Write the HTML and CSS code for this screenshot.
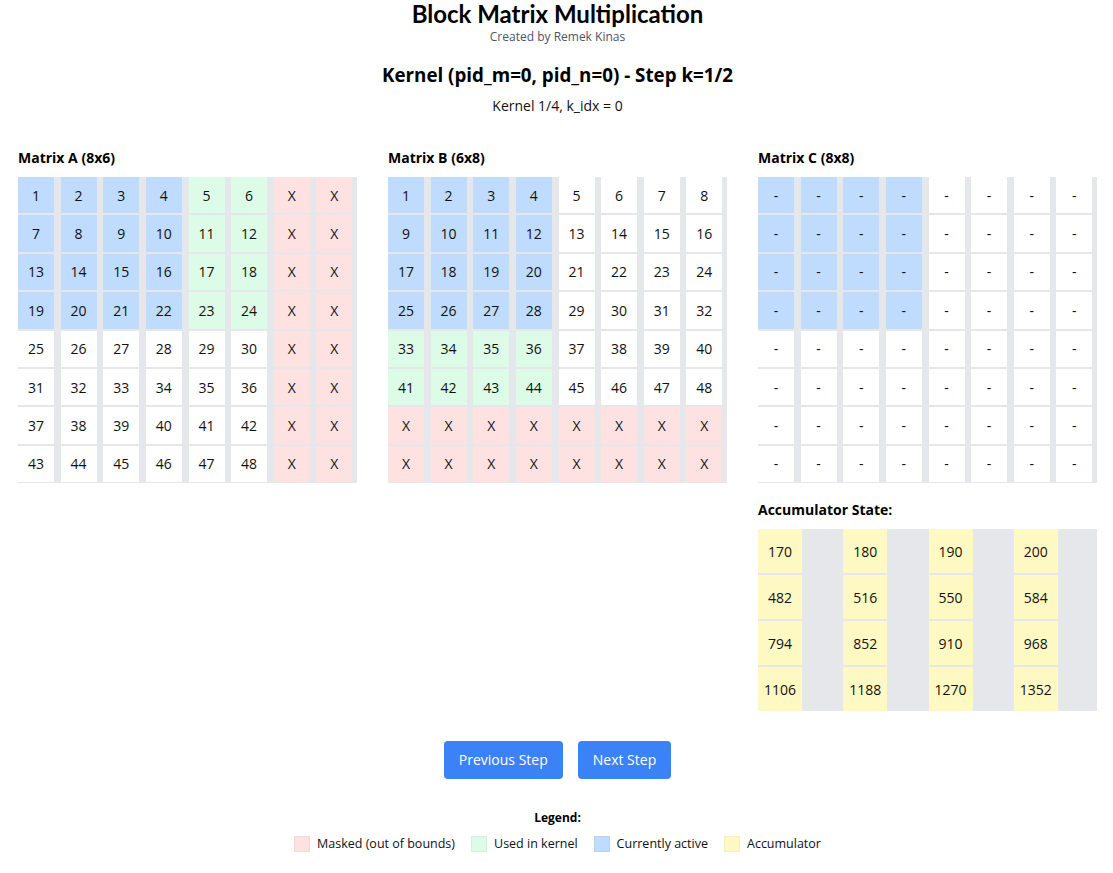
FILE: index.html
```html
<!DOCTYPE html>
<html lang="en">
<head>
<meta charset="utf-8">
<title>Block Matrix Multiplication</title>
<link rel="stylesheet" href="styles.css">
</head>
<body>
<div class="page">
  <header class="header">
    <h1 class="title">Block Matrix Multiplication</h1>
    <p class="credit">Created by Remek Kinas</p>
    <h2 class="step">Kernel (pid_m=0, pid_n=0) - Step k=1/2</h2>
    <p class="kernel-info">Kernel 1/4, k_idx = 0</p>
  </header>

  <main class="matrices">
    <section class="matrix">
      <h3 class="matrix-title">Matrix A (8x6)</h3>
      <div class="grid">
        <div class="cell active">1</div><div class="cell active">2</div><div class="cell active">3</div><div class="cell active">4</div><div class="cell used">5</div><div class="cell used">6</div><div class="cell masked">X</div><div class="cell masked">X</div>
        <div class="cell active">7</div><div class="cell active">8</div><div class="cell active">9</div><div class="cell active">10</div><div class="cell used">11</div><div class="cell used">12</div><div class="cell masked">X</div><div class="cell masked">X</div>
        <div class="cell active">13</div><div class="cell active">14</div><div class="cell active">15</div><div class="cell active">16</div><div class="cell used">17</div><div class="cell used">18</div><div class="cell masked">X</div><div class="cell masked">X</div>
        <div class="cell active">19</div><div class="cell active">20</div><div class="cell active">21</div><div class="cell active">22</div><div class="cell used">23</div><div class="cell used">24</div><div class="cell masked">X</div><div class="cell masked">X</div>
        <div class="cell">25</div><div class="cell">26</div><div class="cell">27</div><div class="cell">28</div><div class="cell">29</div><div class="cell">30</div><div class="cell masked">X</div><div class="cell masked">X</div>
        <div class="cell">31</div><div class="cell">32</div><div class="cell">33</div><div class="cell">34</div><div class="cell">35</div><div class="cell">36</div><div class="cell masked">X</div><div class="cell masked">X</div>
        <div class="cell">37</div><div class="cell">38</div><div class="cell">39</div><div class="cell">40</div><div class="cell">41</div><div class="cell">42</div><div class="cell masked">X</div><div class="cell masked">X</div>
        <div class="cell">43</div><div class="cell">44</div><div class="cell">45</div><div class="cell">46</div><div class="cell">47</div><div class="cell">48</div><div class="cell masked">X</div><div class="cell masked">X</div>
      </div>
    </section>

    <section class="matrix">
      <h3 class="matrix-title">Matrix B (6x8)</h3>
      <div class="grid">
        <div class="cell active">1</div><div class="cell active">2</div><div class="cell active">3</div><div class="cell active">4</div><div class="cell">5</div><div class="cell">6</div><div class="cell">7</div><div class="cell">8</div>
        <div class="cell active">9</div><div class="cell active">10</div><div class="cell active">11</div><div class="cell active">12</div><div class="cell">13</div><div class="cell">14</div><div class="cell">15</div><div class="cell">16</div>
        <div class="cell active">17</div><div class="cell active">18</div><div class="cell active">19</div><div class="cell active">20</div><div class="cell">21</div><div class="cell">22</div><div class="cell">23</div><div class="cell">24</div>
        <div class="cell active">25</div><div class="cell active">26</div><div class="cell active">27</div><div class="cell active">28</div><div class="cell">29</div><div class="cell">30</div><div class="cell">31</div><div class="cell">32</div>
        <div class="cell used">33</div><div class="cell used">34</div><div class="cell used">35</div><div class="cell used">36</div><div class="cell">37</div><div class="cell">38</div><div class="cell">39</div><div class="cell">40</div>
        <div class="cell used">41</div><div class="cell used">42</div><div class="cell used">43</div><div class="cell used">44</div><div class="cell">45</div><div class="cell">46</div><div class="cell">47</div><div class="cell">48</div>
        <div class="cell masked">X</div><div class="cell masked">X</div><div class="cell masked">X</div><div class="cell masked">X</div><div class="cell masked">X</div><div class="cell masked">X</div><div class="cell masked">X</div><div class="cell masked">X</div>
        <div class="cell masked">X</div><div class="cell masked">X</div><div class="cell masked">X</div><div class="cell masked">X</div><div class="cell masked">X</div><div class="cell masked">X</div><div class="cell masked">X</div><div class="cell masked">X</div>
      </div>
    </section>

    <section class="matrix">
      <h3 class="matrix-title">Matrix C (8x8)</h3>
      <div class="grid">
        <div class="cell active">-</div><div class="cell active">-</div><div class="cell active">-</div><div class="cell active">-</div><div class="cell">-</div><div class="cell">-</div><div class="cell">-</div><div class="cell">-</div>
        <div class="cell active">-</div><div class="cell active">-</div><div class="cell active">-</div><div class="cell active">-</div><div class="cell">-</div><div class="cell">-</div><div class="cell">-</div><div class="cell">-</div>
        <div class="cell active">-</div><div class="cell active">-</div><div class="cell active">-</div><div class="cell active">-</div><div class="cell">-</div><div class="cell">-</div><div class="cell">-</div><div class="cell">-</div>
        <div class="cell active">-</div><div class="cell active">-</div><div class="cell active">-</div><div class="cell active">-</div><div class="cell">-</div><div class="cell">-</div><div class="cell">-</div><div class="cell">-</div>
        <div class="cell">-</div><div class="cell">-</div><div class="cell">-</div><div class="cell">-</div><div class="cell">-</div><div class="cell">-</div><div class="cell">-</div><div class="cell">-</div>
        <div class="cell">-</div><div class="cell">-</div><div class="cell">-</div><div class="cell">-</div><div class="cell">-</div><div class="cell">-</div><div class="cell">-</div><div class="cell">-</div>
        <div class="cell">-</div><div class="cell">-</div><div class="cell">-</div><div class="cell">-</div><div class="cell">-</div><div class="cell">-</div><div class="cell">-</div><div class="cell">-</div>
        <div class="cell">-</div><div class="cell">-</div><div class="cell">-</div><div class="cell">-</div><div class="cell">-</div><div class="cell">-</div><div class="cell">-</div><div class="cell">-</div>
      </div>

      <div class="accumulator">
        <h3 class="matrix-title">Accumulator State:</h3>
        <div class="acc-grid">
          <div class="acc-cell">170</div><div class="acc-cell">180</div><div class="acc-cell">190</div><div class="acc-cell">200</div>
          <div class="acc-cell">482</div><div class="acc-cell">516</div><div class="acc-cell">550</div><div class="acc-cell">584</div>
          <div class="acc-cell">794</div><div class="acc-cell">852</div><div class="acc-cell">910</div><div class="acc-cell">968</div>
          <div class="acc-cell">1106</div><div class="acc-cell">1188</div><div class="acc-cell">1270</div><div class="acc-cell">1352</div>
        </div>
      </div>
    </section>
  </main>

  <div class="controls">
    <button class="btn" type="button">Previous Step</button>
    <button class="btn" type="button">Next Step</button>
  </div>

  <footer class="legend">
    <div class="legend-title">Legend:</div>
    <div class="legend-items">
      <div class="legend-item"><span class="swatch masked"></span>Masked (out of bounds)</div>
      <div class="legend-item"><span class="swatch used"></span>Used in kernel</div>
      <div class="legend-item"><span class="swatch active"></span>Currently active</div>
      <div class="legend-item"><span class="swatch acc"></span>Accumulator</div>
    </div>
  </footer>
</div>
</body>
</html>
```

FILE: styles.css
```css
* {
  box-sizing: border-box;
}

body {
  margin: 0;
  background: #ffffff;
  color: #111111;
  font-family: "Open Sans", "Noto Sans", sans-serif;
}

.page {
  padding: 0 16px 0 18px;
}

.header {
  text-align: center;
}

.title {
  margin: 0;
  font-family: Lato, "Open Sans", sans-serif;
  font-size: 24px;
  line-height: 28px;
  font-weight: 700;
  color: #000000;
}

.credit {
  margin: 1px 0 0;
  font-size: 12px;
  line-height: 16px;
  color: #4b5563;
}

.step {
  margin: 16px 0 0;
  font-size: 18.8px;
  line-height: 28px;
  font-weight: 700;
  color: #000000;
}

.kernel-info {
  margin: 7px 0 0;
  font-size: 14px;
  line-height: 20px;
}

.matrices {
  display: grid;
  grid-template-columns: repeat(3, 1fr);
  column-gap: 31px;
  margin-top: 32px;
}

.matrix-title {
  margin: 0 0 9px;
  font-size: 14px;
  line-height: 20px;
  font-weight: 700;
  color: #000000;
}

.grid {
  display: grid;
  grid-template-columns: repeat(8, 1fr);
  grid-auto-rows: 36.4px;
  gap: 2px;
  padding-bottom: 1px;
  background: #e5e7eb;
}

.cell {
  width: 36px;
  display: flex;
  align-items: center;
  justify-content: center;
  background: #ffffff;
  font-size: 14px;
}

.active {
  background: #bfdbfe;
}

.used {
  background: #dcfce7;
}

.masked {
  background: #fee2e2;
}

.acc {
  background: #fef9c3;
}

.accumulator {
  margin-top: 17px;
}

.acc-grid {
  display: grid;
  grid-template-columns: repeat(4, 1fr);
  grid-auto-rows: 44px;
  gap: 2px;
  background: #e5e7eb;
}

.acc-cell {
  width: 44px;
  display: flex;
  align-items: center;
  justify-content: center;
  background: #fef9c3;
  font-size: 14px;
}

.controls {
  display: flex;
  justify-content: center;
  gap: 15px;
  margin-top: 30px;
}

.btn {
  padding: 9px 15px;
  border: none;
  border-radius: 4px;
  background: #3b82f6;
  color: #ffffff;
  font-family: inherit;
  font-size: 14px;
  line-height: 20px;
}

.legend {
  margin-top: 31px;
  text-align: center;
}

.legend-title {
  font-size: 12px;
  line-height: 16px;
  font-weight: 700;
  color: #000000;
}

.legend-items {
  display: flex;
  justify-content: center;
  gap: 16px;
  margin-top: 10px;
}

.legend-item {
  display: flex;
  align-items: center;
  gap: 7px;
  font-size: 12.5px;
  line-height: 16px;
}

.swatch {
  width: 16px;
  height: 16px;
  border: 1px solid rgba(0, 0, 0, 0.04);
}
```
